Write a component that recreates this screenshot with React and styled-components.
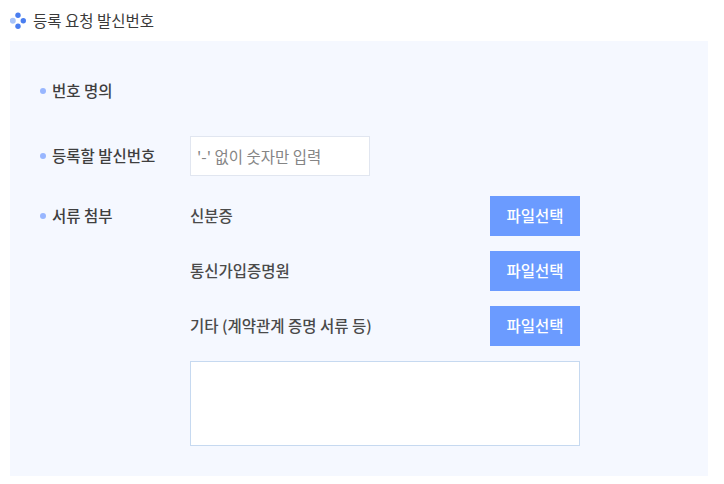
import React from "react";
import styled, { createGlobalStyle } from "styled-components";

const Global = createGlobalStyle`
  html, body { margin: 0; padding: 0; background: #fff; }
  body { font-family: "Noto Sans CJK KR", "Noto Sans", sans-serif; }
`;
const Page = styled.div`
  width: 724px;
  height: 484px;
  padding: 0 16px 8px 10px;
  box-sizing: border-box;
  overflow: hidden;
`;
const Title = styled.h2`
  display: flex;
  align-items: center;
  gap: 6px;
  height: 41px;
  margin: 0;
  font-size: 15.5px;
  font-weight: 400;
  color: #3a3a3a;
  box-sizing: border-box;
  padding-bottom: 1px;
`;
const Panel = styled.div`
  background: #f5f8ff;
  height: 435px;
  box-sizing: border-box;
  padding: 30px 0 0 30px;
  display: flex;
  flex-direction: column;
`;
const Row = styled.div`
  display: flex;
  align-items: ${(p) => (p.$top ? "flex-start" : "center")};
  min-height: 40px;
  margin-top: ${(p) => p.$mt || 0}px;
`;
const Label = styled.div`
  width: 150px;
  height: 40px;
  flex: none;
  display: flex;
  align-items: center;
  gap: 6px;
  font-size: 15.5px;
  font-weight: 500;
  color: #3f3f3f;
  padding-bottom: 2px;
  box-sizing: border-box;
`;
const Dot = styled.span`
  width: 6px;
  height: 6px;
  border-radius: 50%;
  background: #98b6ff;
  margin-top: 2px;
`;
const Input = styled.input`
  width: 180px;
  height: 40px;
  box-sizing: border-box;
  border: 1px solid #e1e6f0;
  background: #fff;
  padding: 0 6px 1px;
  outline: none;
  font: 400 15.5px "Noto Sans CJK KR", sans-serif;
  &::placeholder { color: #858585; opacity: 1; }
`;
const Files = styled.div`
  display: flex;
  flex-direction: column;
  gap: 15px;
  width: 390px;
`;
const FileRow = styled.div`
  display: flex;
  align-items: center;
  justify-content: space-between;
  height: 40px;
  font-size: 15.5px;
  font-weight: 500;
  color: #4a4a4a;
`;
const FileText = styled.span`
  margin-top: -2px;
`;
const FileButton = styled.button`
  width: 90px;
  height: 40px;
  border: 0;
  padding: 0 0 2px;
  background: #6b9bff;
  color: #fff;
  font: 500 15.5px "Noto Sans CJK KR", sans-serif;
`;
const Area = styled.textarea`
  display: block;
  width: 390px;
  height: 85px;
  box-sizing: border-box;
  border: 1px solid #c6d9f0;
  background: #fff;
  resize: none;
  outline: none;
  margin: 0;
`;
const Logo = () => (
  <svg width="17" height="18" viewBox="0 0 17 18" aria-hidden="true">
    <circle cx="8" cy="4.3" r="2.7" fill="#4a7ef0" />
    <circle cx="2.8" cy="9.7" r="3" fill="#a8c4f8" />
    <circle cx="13.3" cy="9.7" r="2.7" fill="#4a7ef0" />
    <circle cx="8" cy="15.2" r="2.7" fill="#4a7ef0" />
  </svg>
);

export default function App() {
  return (
    <Page>
      <Global />
      <Title><Logo />등록 요청 발신번호</Title>
      <Panel>
        <Row><Label><Dot />번호 명의</Label></Row>
        <Row $mt={25}><Label><Dot />등록할 발신번호</Label><Input placeholder="'-' 없이 숫자만 입력" /></Row>
        <Row $mt={20} $top>
          <Label><Dot />서류 첨부</Label>
          <Files>
            <FileRow><FileText>신분증</FileText><FileButton>파일선택</FileButton></FileRow>
            <FileRow><FileText>통신가입증명원</FileText><FileButton>파일선택</FileButton></FileRow>
            <FileRow><FileText>기타 (계약관계 증명 서류 등)</FileText><FileButton>파일선택</FileButton></FileRow>
            <Area />
          </Files>
        </Row>
      </Panel>
    </Page>
  );
}
